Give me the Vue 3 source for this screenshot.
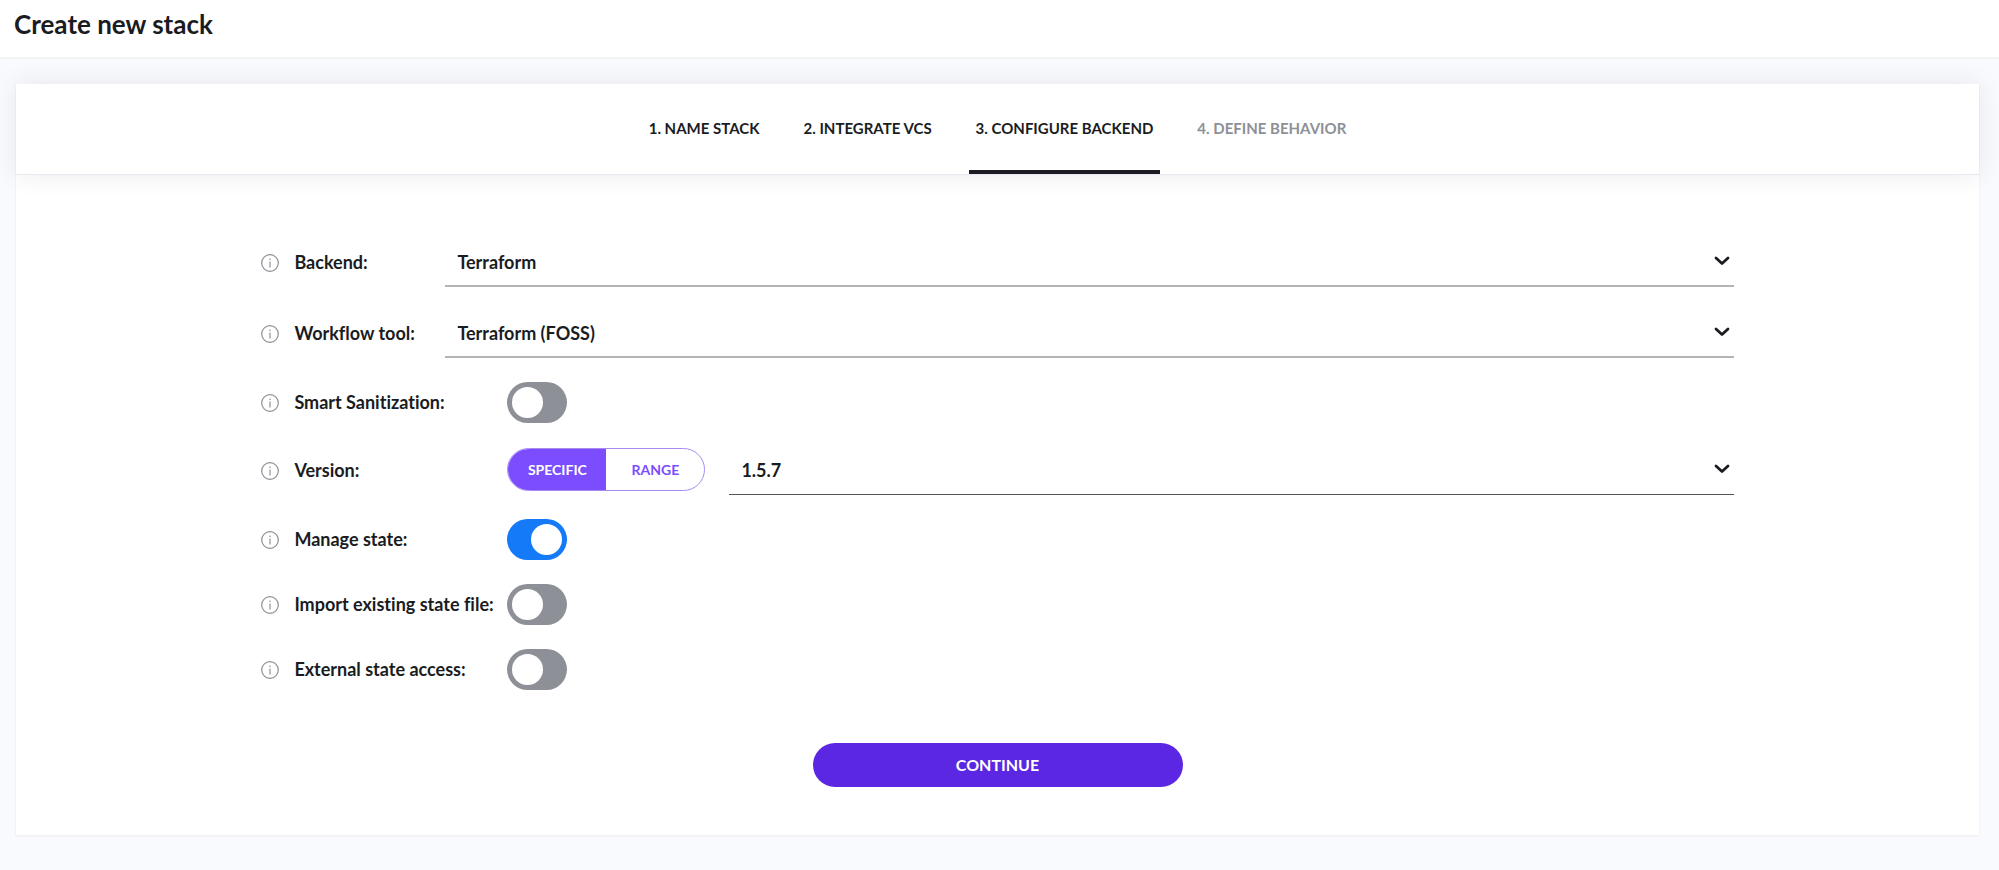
<script setup>
import { ref } from 'vue'

const steps = [
  { label: '1. NAME STACK', state: 'done' },
  { label: '2. INTEGRATE VCS', state: 'done' },
  { label: '3. CONFIGURE BACKEND', state: 'current' },
  { label: '4. DEFINE BEHAVIOR', state: 'pending' }
]

const rows = ref([
  { id: 'backend', label: 'Backend:', type: 'select', value: 'Terraform' },
  { id: 'workflow', label: 'Workflow tool:', type: 'select', value: 'Terraform (FOSS)' },
  { id: 'sanitization', label: 'Smart Sanitization:', type: 'toggle', value: false },
  { id: 'version', label: 'Version:', type: 'version', value: '1.5.7' },
  { id: 'manage', label: 'Manage state:', type: 'toggle', value: true },
  { id: 'import', label: 'Import existing state file:', type: 'toggle', value: false },
  { id: 'external', label: 'External state access:', type: 'toggle', value: false }
])

const versionMode = ref('SPECIFIC')
</script>

<template>
  <header class="page-header">
    <h1>Create new stack</h1>
  </header>
  <main class="card">
    <nav class="steps">
      <a v-for="step in steps" :key="step.label" href="#" class="step" :class="step.state">{{ step.label }}</a>
    </nav>
    <form class="form" @submit.prevent>
      <div v-for="row in rows" :key="row.id" class="row" :class="'row-' + row.type">
        <button type="button" class="info" :aria-label="row.label">
          <svg viewBox="0 0 18 18" width="18" height="18" aria-hidden="true">
            <circle cx="9" cy="9" r="8.3" fill="none" stroke="#8d9097" stroke-width="1.2" />
            <circle cx="9" cy="5.2" r="0.8" fill="#8d9097" />
            <path d="M9 7.4V13.4" fill="none" stroke="#8d9097" stroke-width="1.2" />
          </svg>
        </button>
        <label class="name" :for="row.id">{{ row.label }}</label>
        <input v-if="row.type === 'toggle'" :id="row.id" v-model="row.value" type="checkbox" class="toggle" />
        <div v-if="row.type === 'version'" class="segments">
          <label v-for="mode in ['SPECIFIC', 'RANGE']" :key="mode" class="segment" :class="{ active: versionMode === mode }">
            <input v-model="versionMode" type="radio" name="version-mode" :value="mode" />{{ mode }}
          </label>
        </div>
        <div v-if="row.type !== 'toggle'" class="picker">
          <select :id="row.id" v-model="row.value">
            <option>{{ row.value }}</option>
          </select>
          <svg class="chevron" viewBox="0 0 16 10" width="16" height="10" aria-hidden="true">
            <path d="M2 2L8 7.6L14 2" fill="none" stroke="#1a1c22" stroke-width="2.8" stroke-linecap="round" stroke-linejoin="round" />
          </svg>
        </div>
      </div>
      <button type="submit" class="continue">CONTINUE</button>
    </form>
  </main>
</template>

<style>
body {
  margin: 0;
  background: #f9fafd;
}
</style>

<style scoped>
.page-header,
.card,
.card button,
.card select {
  font-family: Lato, "Open Sans", sans-serif;
  font-weight: 700;
  font-variant-ligatures: none;
  color: #1a1c22;
}
.page-header {
  padding: 8px 14px 17px;
  background: #fff;
  border-bottom: 2px solid #f2f2f4;
}
h1 {
  margin: 0;
  font-size: 26px;
  line-height: 32px;
}
.card {
  margin: 25px 19px 24px 15px;
  background: #fff;
  border: solid #f2f2f8;
  border-width: 0 1px 2px;
  border-radius: 2px;
}
.steps {
  display: flex;
  justify-content: center;
  gap: 30px;
  height: 90px;
  background: #fff;
  border-bottom: 1px solid #e8e8ee;
  box-shadow: 0 0 24px rgba(40, 30, 80, 0.09);
}
.step {
  box-sizing: border-box;
  padding: 0 7px;
  border-bottom: 4px solid transparent;
  color: inherit;
  font-size: 15px;
  line-height: 88px;
  text-decoration: none;
  white-space: nowrap;
}
.step.current {
  border-color: #1a1c22;
}
.step.pending {
  color: #8d9097;
}
.form {
  display: flex;
  flex-direction: column;
  gap: 24px;
  width: 75%;
  margin: 0 auto;
  padding: 65px 0 48px;
}
.row {
  display: flex;
  align-items: center;
}
.info {
  flex: none;
  width: 18px;
  height: 18px;
  margin-right: 15px;
  padding: 0;
  border: 0;
  background: none;
}
.info svg {
  display: block;
}
.name {
  flex: none;
  width: 213px;
  padding-bottom: 2px;
  font-size: 18px;
  line-height: 24px;
  white-space: nowrap;
}
.row-select .name {
  width: 151px;
}
.row-select .name,
.row-select .info {
  margin-bottom: 2px;
}
.toggle {
  appearance: none;
  display: flex;
  justify-content: flex-start;
  align-items: center;
  box-sizing: border-box;
  width: 60px;
  height: 41px;
  margin: 0;
  padding: 0 5px;
  border-radius: 21px;
  background: #8d9097;
}
.toggle::before {
  content: "";
  width: 31px;
  height: 31px;
  border-radius: 50%;
  background: #fff;
}
.toggle:checked {
  justify-content: flex-end;
  background: #147af8;
}
.segments {
  display: flex;
  box-sizing: border-box;
  width: 198px;
  height: 43px;
  margin: 0 24px 3px 0;
  overflow: hidden;
  border: 1px solid #a78bf5;
  border-radius: 22px;
}
.segment {
  flex: 1;
  color: #7c4dff;
  font-size: 14px;
  line-height: 41px;
  text-align: center;
}
.segment.active {
  background: #7c4dff;
  color: #fff;
}
.segment input {
  appearance: none;
  width: 0;
  height: 0;
  margin: 0;
}
.picker {
  position: relative;
  flex: 1;
  border-bottom: 2px solid #b4b4b6;
}
.row-version .picker {
  border-bottom: 1px solid #55565c;
}
.picker select {
  display: block;
  appearance: none;
  width: 100%;
  height: 45px;
  padding: 0 40px 2px 12px;
  border: 0;
  background: transparent;
  font-size: 18px;
}
.row-version .picker select {
  height: 47px;
}
.chevron {
  position: absolute;
  right: 4px;
  top: 16px;
  pointer-events: none;
}
.row-version .chevron {
  top: 17px;
}
.card .continue {
  align-self: center;
  width: 370px;
  height: 44px;
  margin-top: 29px;
  padding: 0 0 2px;
  border: 0;
  border-radius: 22px;
  background: #5c27e3;
  color: #fff;
  font-size: 16px;
}
</style>
